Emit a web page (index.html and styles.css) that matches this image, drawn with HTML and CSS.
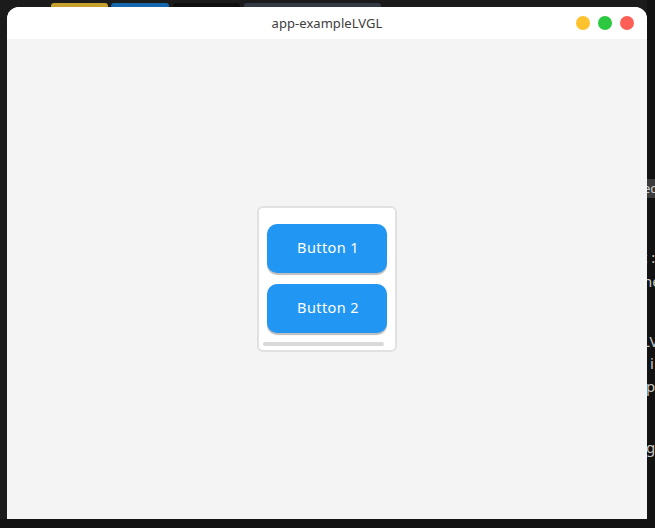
FILE: index.html
```html
<!DOCTYPE html>
<html>
<head>
<meta charset="utf-8">
<link rel="stylesheet" href="styles.css">
</head>
<body>
<div class="desktop">
  <div class="tabs">
    <span class="tab tab-yellow"></span>
    <span class="tab tab-blue"></span>
    <span class="tab tab-black"></span>
    <span class="tab tab-slate"></span>
  </div>
  <div class="side-text">
    <div class="side-line side-box">ed</div>
    <div class="side-line l1">t :</div>
    <div class="side-line l2">he</div>
    <div class="side-line l3">LV</div>
    <div class="side-line l4">i</div>
    <div class="side-line l5">p</div>
    <div class="side-line l6">g</div>
  </div>
  <div class="bottom-bar"></div>
  <div class="window">
    <div class="titlebar">
      <span class="title">app-exampleLVGL</span>
      <div class="controls">
        <span class="dot dot-min"></span>
        <span class="dot dot-max"></span>
        <span class="dot dot-close"></span>
      </div>
    </div>
    <div class="screen">
      <div class="panel">
        <button class="btn">Button 1</button>
        <button class="btn">Button 2</button>
        <div class="scrollbar"></div>
      </div>
    </div>
  </div>
</div>
</body>
</html>
```
FILE: styles.css
```css
html, body {
  margin: 0;
  padding: 0;
}
body {
  background: #1b1b1b;
  width: 655px;
  height: 528px;
  overflow: hidden;
}
.desktop {
  position: relative;
  width: 655px;
  height: 528px;
  background: #1b1b1b;
  overflow: hidden;
  font-family: "Noto Sans", sans-serif;
}
.tabs {
  display: flex;
  padding: 3px 0 0 51px;
  height: 20px;
}
.tab {
  display: block;
  height: 20px;
  border-radius: 3px 3px 0 0;
}
.tab-yellow { width: 57px; background: #c6a02a; }
.tab-blue { width: 58px; margin-left: 3px; background: #1466ad; }
.tab-black { width: 67px; margin-left: 4px; background: #0e0e0e; }
.tab-slate { width: 137px; margin-left: 4px; background: #333a44; }

.side-text {
  position: absolute;
  left: 647px;
  top: 0;
  width: 8px;
  height: 528px;
  background: #121212;
  overflow: hidden;
  color: #c8c8c8;
  font-size: 15px;
  white-space: nowrap;
}
.side-line {
  position: absolute;
  left: -2px;
  line-height: 20px;
}
.side-box {
  top: 179px;
  left: 0;
  width: 20px;
  height: 19px;
  line-height: 19px;
  background: #3c3c3c;
  color: #d0d0d0;
  font-size: 13px;
  text-indent: -4px;
}
.l1 { top: 247px; left: -5px; }
.l2 { top: 271px; left: -4px; }
.l3 { top: 331px; left: -5px; }
.l4 { top: 353px; left: 3px; }
.l5 { top: 376px; left: -1px; }
.l6 { top: 437px; left: -1px; }

.bottom-bar {
  position: absolute;
  left: 0;
  top: 519px;
  width: 655px;
  height: 9px;
  background: #121212;
}

.window {
  position: absolute;
  left: 7px;
  top: 7px;
  width: 640px;
  height: 512px;
  border-radius: 12px 12px 0 0;
  overflow: hidden;
  display: flex;
  flex-direction: column;
  background: #f4f4f4;
}
.titlebar {
  position: relative;
  height: 32px;
  background: #ffffff;
  display: flex;
  align-items: center;
  justify-content: center;
}
.title {
  font-family: "Noto Sans", sans-serif;
  font-size: 13px;
  color: #3d3d3d;
  letter-spacing: 0.05px;
}
.controls {
  position: absolute;
  right: 13px;
  top: 9px;
  display: flex;
  gap: 8px;
}
.dot {
  display: block;
  width: 14px;
  height: 14px;
  border-radius: 50%;
}
.dot-min { background: #fdc22e; }
.dot-max { background: #2bc840; }
.dot-close { background: #fd5f57; }

.screen {
  flex: 1;
  background: #f4f4f4;
  display: flex;
  align-items: center;
  justify-content: center;
}
.panel {
  position: relative;
  box-sizing: border-box;
  width: 140px;
  height: 146px;
  background: #ffffff;
  border: 2px solid #e1e1e1;
  border-radius: 6px;
  padding: 16px 8px 0 8px;
  display: flex;
  flex-direction: column;
  gap: 11px;
}
.btn {
  width: 120px;
  height: 49px;
  flex: none;
  border: none;
  border-radius: 10px;
  background: #2196f3;
  color: #ffffff;
  font-family: "Noto Sans", sans-serif;
  font-size: 14.5px;
  letter-spacing: 0.4px;
  padding: 0 0 3px 2px;
  box-shadow: 0 2px 1px #bdbdbd;
}
.scrollbar {
  position: absolute;
  left: 4px;
  bottom: 4px;
  width: 121px;
  height: 4px;
  border-radius: 2px;
  background: #d9d9d9;
}
```
